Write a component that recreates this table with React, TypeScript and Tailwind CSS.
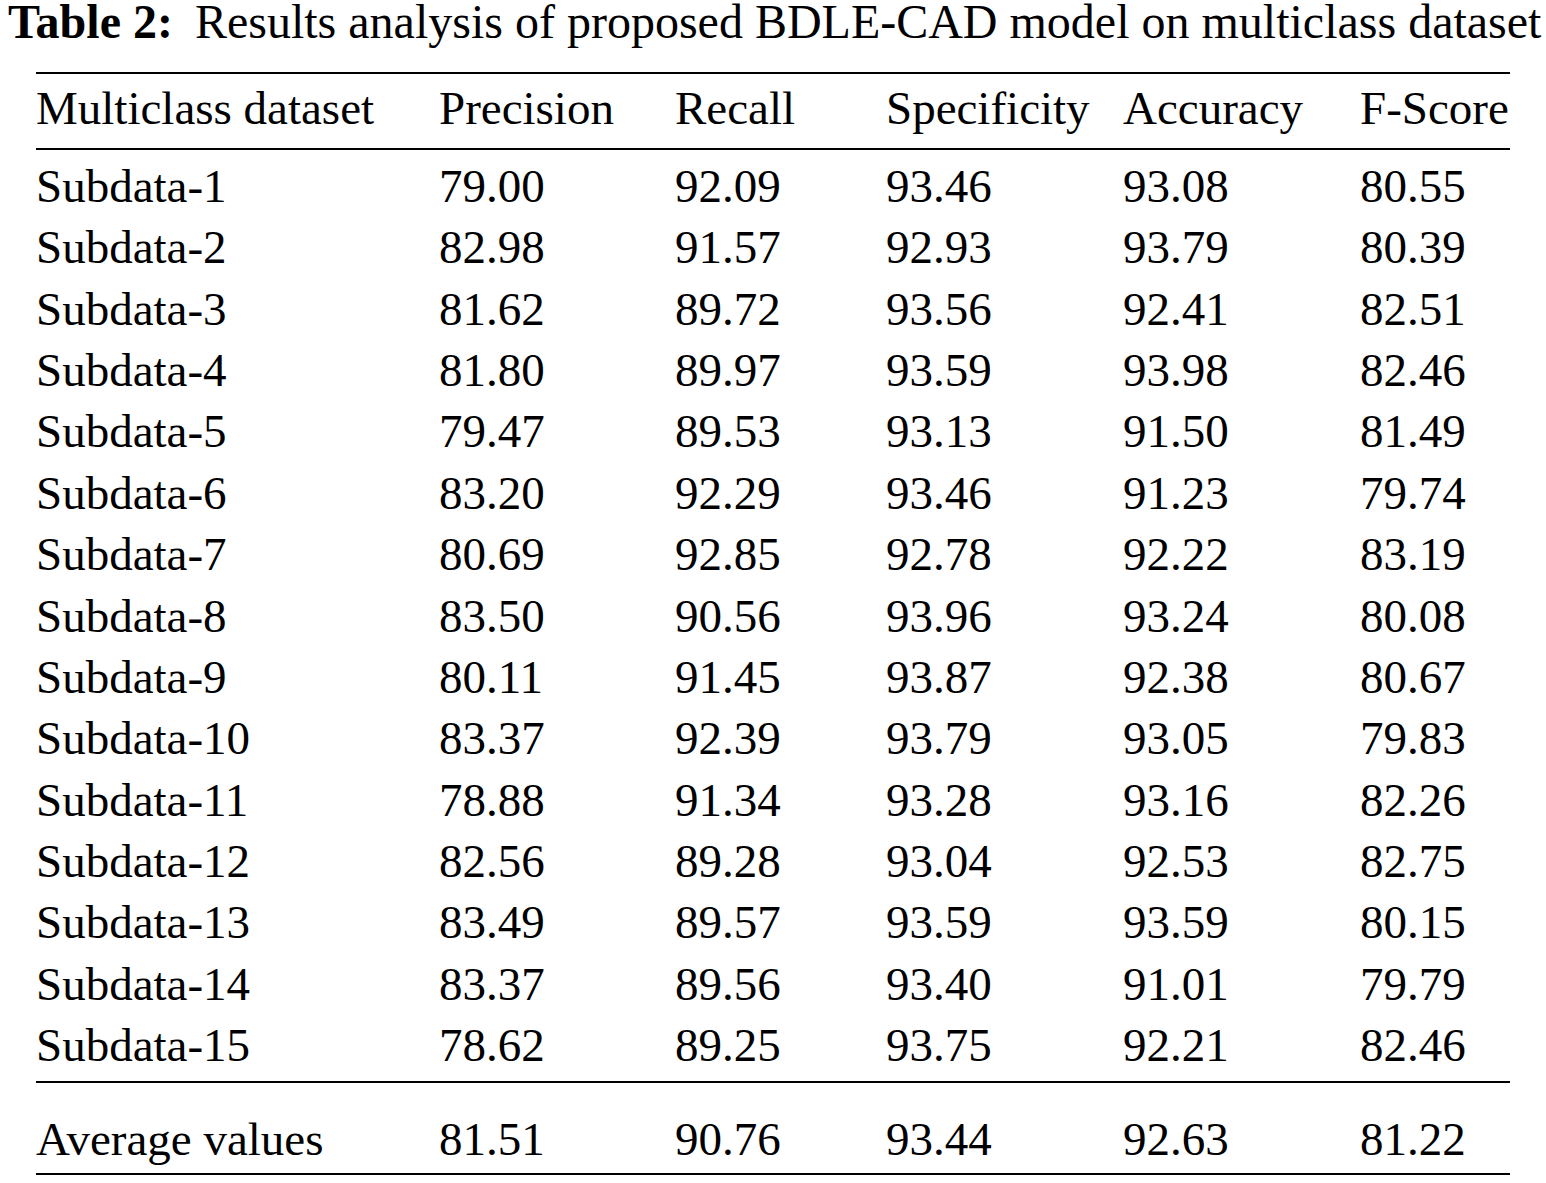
const rows: string[][] = [
  ["Subdata-1", "79.00", "92.09", "93.46", "93.08", "80.55"],
  ["Subdata-2", "82.98", "91.57", "92.93", "93.79", "80.39"],
  ["Subdata-3", "81.62", "89.72", "93.56", "92.41", "82.51"],
  ["Subdata-4", "81.80", "89.97", "93.59", "93.98", "82.46"],
  ["Subdata-5", "79.47", "89.53", "93.13", "91.50", "81.49"],
  ["Subdata-6", "83.20", "92.29", "93.46", "91.23", "79.74"],
  ["Subdata-7", "80.69", "92.85", "92.78", "92.22", "83.19"],
  ["Subdata-8", "83.50", "90.56", "93.96", "93.24", "80.08"],
  ["Subdata-9", "80.11", "91.45", "93.87", "92.38", "80.67"],
  ["Subdata-10", "83.37", "92.39", "93.79", "93.05", "79.83"],
  ["Subdata-11", "78.88", "91.34", "93.28", "93.16", "82.26"],
  ["Subdata-12", "82.56", "89.28", "93.04", "92.53", "82.75"],
  ["Subdata-13", "83.49", "89.57", "93.59", "93.59", "80.15"],
  ["Subdata-14", "83.37", "89.56", "93.40", "91.01", "79.79"],
  ["Subdata-15", "78.62", "89.25", "93.75", "92.21", "82.46"],
];

const header = ["Multiclass dataset", "Precision", "Recall", "Specificity", "Accuracy", "F-Score"];
const average = ["Average values", "81.51", "90.76", "93.44", "92.63", "81.22"];

// column starts: 36, 439, 675, 886, 1123, 1360 ; rules end at 1510
const cols = "grid grid-cols-[403px_236px_211px_237px_237px_150px]";

const Row = ({ cells, className }: { cells: string[]; className: string }) => (
  <div className={`${cols} ${className}`}>
    {cells.map((c, i) => (
      <div key={i} className="whitespace-nowrap">
        {c}
      </div>
    ))}
  </div>
);

const App = () => (
  <div className="min-h-screen bg-white text-black font-['Liberation_Serif','Times_New_Roman',serif] text-[47px]">
    <p className="pl-[8px] pt-[2px] text-[48px] leading-[40px] whitespace-nowrap">
      <span className="font-bold">Table 2:</span>
      <span className="ml-[22px]">Results analysis of proposed BDLE-CAD model on multiclass dataset</span>
    </p>

    <div className="ml-[36px] mt-[30px] w-[1474px]">
      <div className="h-[2px] bg-black" />
      <Row cells={header} className="pt-[8px] pb-[14px] leading-[52px]" />
      <div className="h-[2px] bg-black" />
      <div className="pt-[6px] pb-[5px]">
        {rows.map((r) => (
          <Row key={r[0]} cells={r} className="leading-[61.36px]" />
        ))}
      </div>
      <div className="h-[2px] bg-black" />
      <Row cells={average} className="pt-[30px] pb-[8px] leading-[52px]" />
      <div className="h-[2px] bg-black" />
    </div>
  </div>
);

export default App;
